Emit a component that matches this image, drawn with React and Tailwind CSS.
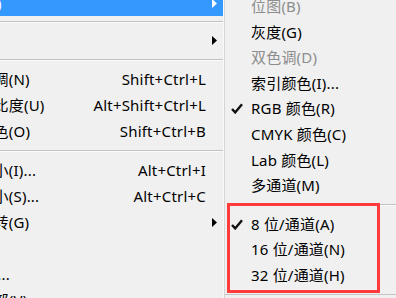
import React from "react";

const FONT = { fontFamily: '"Noto Sans", "Noto Sans CJK SC", sans-serif' };

function Arrow({ white }) {
  return (
    <svg width="5" height="9" viewBox="0 0 5 9" className="block">
      <path d="M0 0 L5 4.5 L0 9 Z" fill={white ? "#ffffff" : "#000000"} />
    </svg>
  );
}

function Check() {
  return (
    <svg width="12" height="11" viewBox="0 0 12 11" className="block">
      <path d="M1 6 L4.2 9.4 L11 1.2" fill="none" stroke="#111" strokeWidth="2.4" strokeLinejoin="miter" strokeLinecap="butt" />
    </svg>
  );
}

function LeftRow({ label, shortcut, arrow, active }) {
  return (
    <div className={"h-[26px] shrink-0 flex items-center " + (active ? "bg-[#3399ff] text-white" : "text-black")}>
      <span className="ml-[-52px] whitespace-nowrap">{label}</span>
      <span className="ml-auto whitespace-nowrap">{shortcut}</span>
      <div className="w-[17px] shrink-0 flex items-center">
        {arrow ? <div className="ml-[6px]"><Arrow white={active} /></div> : null}
      </div>
    </div>
  );
}

function LeftSep({ h }) {
  return (
    <div className={"shrink-0 flex flex-col justify-center " + h}>
      <div className="h-px bg-[#c2c2c2]" />
      <div className="h-px bg-[#fbfbfb]" />
    </div>
  );
}

function SubRow({ label, disabled, checked }) {
  return (
    <div className={"h-[25.6px] shrink-0 flex items-center " + (disabled ? "text-[#8d8d8d]" : "text-black")}>
      <div className="w-[26px] shrink-0 flex items-center pl-[6px]">
        {checked ? <Check /> : null}
      </div>
      <span className="whitespace-nowrap">{label}</span>
    </div>
  );
}

export default function App() {
  return (
    <div className="w-[396px] h-[298px] overflow-hidden bg-[#f0f0f0] flex relative text-[15px] leading-none tracking-[0.2px]" style={FONT}>
      <div className="w-[224px] shrink-0 overflow-hidden flex flex-col mt-[-10px] border-r border-r-[#fafafa]">
        <LeftRow label="模式(M)" arrow active />
        <LeftSep h="h-[11px]" />
        <LeftRow label="调整(J)" arrow />
        <LeftSep h="h-[13px]" />
        <LeftRow label="自动色调(N)" shortcut="Shift+Ctrl+L" />
        <LeftRow label="自动对比度(U)" shortcut="Alt+Shift+Ctrl+L" />
        <LeftRow label="自动颜色(O)" shortcut="Shift+Ctrl+B" />
        <LeftSep h="h-[13px]" />
        <LeftRow label="图像大小(I)..." shortcut="Alt+Ctrl+I" />
        <LeftRow label="画布大小(S)..." shortcut="Alt+Ctrl+C" />
        <LeftRow label="图像旋转(G)" arrow />
        <LeftRow label="裁剪(P)" />
        <LeftRow label="裁切(R)..." />
        <LeftRow label="显示全部(V)" />
      </div>
      <div className="flex-1 flex flex-col border-l border-l-[#d4d4d4]">
        <div className="flex flex-col mt-[-6.3px]">
          <SubRow label="位图(B)" disabled />
          <SubRow label="灰度(G)" />
          <SubRow label="双色调(D)" disabled />
          <SubRow label="索引颜色(I)..." />
          <SubRow label="RGB 颜色(R)" checked />
          <SubRow label="CMYK 颜色(C)" />
          <SubRow label="Lab 颜色(L)" />
          <SubRow label="多通道(M)" />
          <div className="h-[13px] shrink-0 flex flex-col justify-center pl-[26px]">
            <div className="h-px bg-[#c2c2c2]" />
            <div className="h-px bg-[#fbfbfb]" />
          </div>
          <SubRow label="8 位/通道(A)" checked />
          <SubRow label="16 位/通道(N)" />
          <SubRow label="32 位/通道(H)" />
          <div className="h-[6px] shrink-0" />
          <div className="h-px bg-[#c4c4c4]" />
        </div>
      </div>
      <div className="absolute left-[227px] top-[203px] w-[153px] h-[90px] border-[3px] border-[#ff3b3b]" />
    </div>
  );
}
